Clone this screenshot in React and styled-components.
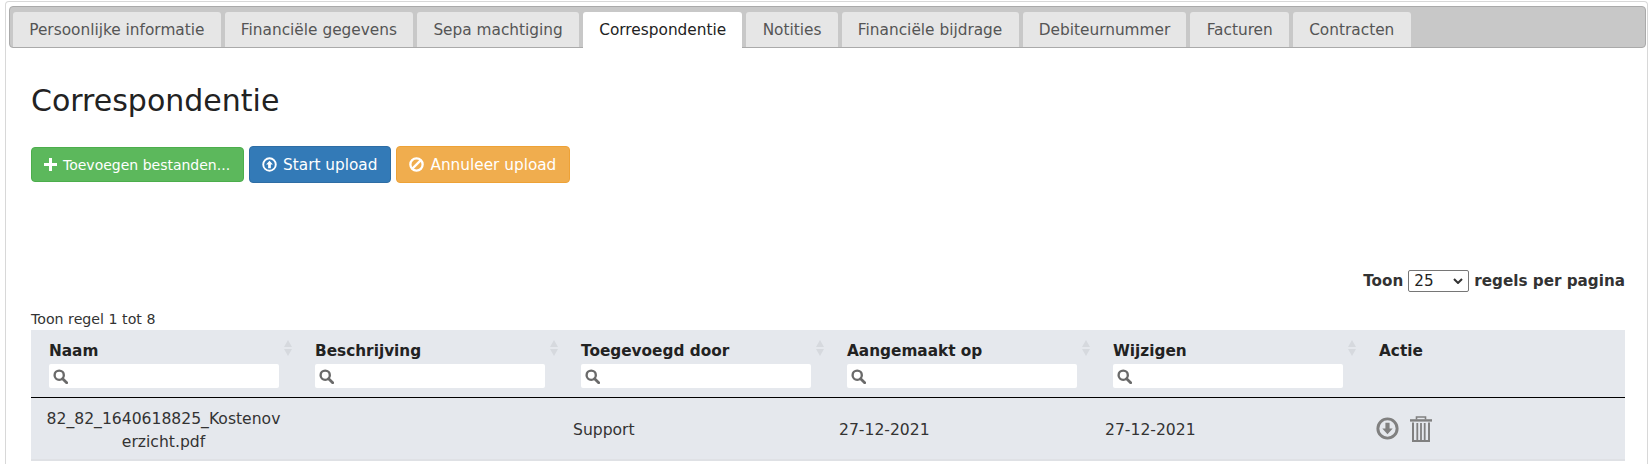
import React from 'react'
import styled, { createGlobalStyle } from 'styled-components'

const GlobalStyle = createGlobalStyle`
  html, body {
    margin: 0;
    padding: 0;
    background: #fff;
    font-family: 'DejaVu Sans', Verdana, sans-serif;
    color: #222;
  }
  * { box-sizing: border-box; }
`

const Panel = styled.div`
  margin: 1px 1px 0 5px;
  height: 463px;
  padding: 4px 1px 0 3px;
  border: 1px solid #d8d8d8;
  border-bottom: 0;
  border-radius: 4px 4px 0 0;
  overflow: hidden;
`

const TabBar = styled.ul`
  display: flex;
  gap: 4px;
  height: 42px;
  margin: 0;
  padding: 5px 0 0 3px;
  list-style: none;
  background: #c8c8c8;
  border: 1px solid #aaa;
  border-radius: 4px;
`

const Tab = styled.li`
  height: ${({ $active }) => ($active ? '37px' : '35px')};
  padding: 8px 16.2px 0;
  font-size: 15.35px;
  line-height: 20px;
  color: ${({ $active }) => ($active ? '#222' : '#555')};
  background: ${({ $active }) => ($active ? '#fff' : '#e6e6e6')};
  border-radius: 3px 3px 0 0;
  white-space: nowrap;
`

const Content = styled.div`
  padding: 0 21px 0 22px;
`

const Title = styled.h1`
  margin: 34px 0 0;
  font-size: 30px;
  font-weight: 400;
  line-height: 38px;
  color: #222;
`

const Buttons = styled.div`
  display: flex;
  align-items: center;
  gap: 5px;
  margin-top: 26px;
`

const Button = styled.button`
  display: flex;
  align-items: center;
  gap: 6px;
  height: ${({ $small }) => ($small ? '35px' : '37px')};
  padding: 0 13px 0 12px;
  font-family: inherit;
  font-size: ${({ $small }) => ($small ? '14px' : '15.3px')};
  color: #fff;
  background: ${({ $bg }) => $bg};
  border: 1px solid ${({ $line }) => $line};
  border-radius: 4px;
`

const PageSize = styled.div`
  display: flex;
  justify-content: flex-end;
  align-items: center;
  gap: 5px;
  margin-top: 87px;
  font-size: 15.2px;
  font-weight: 700;
  color: #333;
`

const Select = styled.div`
  display: flex;
  align-items: center;
  justify-content: space-between;
  width: 61px;
  height: 22px;
  padding: 0 5px;
  font-weight: 400;
  color: #222;
  border: 1px solid #767676;
  border-radius: 2px;
`

const Info = styled.div`
  margin-top: 17px;
  font-size: 14.2px;
  line-height: 21px;
  color: #333;
`

const Row = styled.div`
  display: grid;
  grid-template-columns: repeat(5, 266px) 1fr;
  background: #e5e8ed;
`

const HeadRow = styled(Row)`
  height: 68px;
  border-bottom: 1px solid #000;
`

const BodyRow = styled(Row)`
  height: 63px;
  border-bottom: 2px solid #dfe1e5;
  align-items: center;
`

const HeadCell = styled.div`
  position: relative;
  padding: 11px 0 0 18px;
  font-size: 15.3px;
  font-weight: 700;
  line-height: 20px;
  color: #222;
`

const Sort = styled.svg`
  position: absolute;
  top: 10px;
  right: 5px;
`

const Search = styled.div`
  display: flex;
  align-items: center;
  width: 230px;
  height: 24px;
  margin-top: 3px;
  padding-left: 4px;
  background: #fff;
  border-radius: 2px;
`

const Cell = styled.div`
  padding: 4px 14px 0 13px;
  font-size: 15.6px;
  line-height: 23px;
  text-align: ${({ $center }) => ($center ? 'center' : 'left')};
  overflow-wrap: anywhere;
  color: #333;
`

const PlainCell = styled(Cell)`
  padding-left: 10px;
`

const Actions = styled.div`
  display: flex;
  align-items: center;
  gap: 11px;
  padding-left: 15px;
`

const SearchIcon = () => (
  <svg width="15" height="15" viewBox="0 0 14 14" fill="none" stroke="#6a6a6a">
    <circle cx="5.8" cy="5.8" r="4.3" strokeWidth="2.2" />
    <path d="M9 9l3.8 3.8" strokeWidth="2.6" strokeLinecap="round" />
  </svg>
)

const SortIcon = () => (
  <Sort width="8" height="16" viewBox="0 0 8 16" fill="#d6d9de">
    <path d="M4 0l4 7H0zM4 16l4-7H0z" />
  </Sort>
)

const CircleArrow = ({ up, size = 15, color = '#fff' }) => (
  <svg width={size} height={size} viewBox="0 0 22 22">
    <circle cx="11" cy="11" r="9.2" fill="none" stroke={color} strokeWidth="2.8" />
    <path
      d={up ? 'M11 5.5l5 5.5h-3v5.5H9V11H6z' : 'M11 16.5l5-5.5h-3V5.5H9V11H6z'}
      fill={color}
    />
  </svg>
)

const tabs = [
  'Persoonlijke informatie',
  'Financiële gegevens',
  'Sepa machtiging',
  'Correspondentie',
  'Notities',
  'Financiële bijdrage',
  'Debiteurnummer',
  'Facturen',
  'Contracten',
]

const columns = ['Naam', 'Beschrijving', 'Toegevoegd door', 'Aangemaakt op', 'Wijzigen']

export default function App() {
  return (
    <>
      <GlobalStyle />
      <Panel>
        <TabBar>
          {tabs.map((t) => (
            <Tab key={t} $active={t === 'Correspondentie'}>{t}</Tab>
          ))}
        </TabBar>
        <Content>
          <Title>Correspondentie</Title>
          <Buttons>
            <Button $small $bg="#5cb85c" $line="#4cae4c">
              <svg width="13" height="13" viewBox="0 0 13 13" fill="#fff">
                <path d="M5 0h3v5h5v3H8v5H5V8H0V5h5z" />
              </svg>
              Toevoegen bestanden...
            </Button>
            <Button $bg="#337ab7" $line="#2e6da4">
              <CircleArrow up />
              Start upload
            </Button>
            <Button $bg="#f0ad4e" $line="#eea236">
              <svg width="15" height="15" viewBox="0 0 22 22" fill="none" stroke="#fff" strokeWidth="3.4">
                <circle cx="11" cy="11" r="9" />
                <path d="M4.6 17.4L17.4 4.6" />
              </svg>
              Annuleer upload
            </Button>
          </Buttons>
          <PageSize>
            Toon
            <Select>
              25
              <svg width="10" height="6" viewBox="0 0 10 6" fill="none" stroke="#333" strokeWidth="2">
                <path d="M1 1l4 4 4-4" />
              </svg>
            </Select>
            regels per pagina
          </PageSize>
          <Info>Toon regel 1 tot 8</Info>
          <HeadRow>
            {columns.map((c) => (
              <HeadCell key={c}>
                {c}
                <SortIcon />
                <Search><SearchIcon /></Search>
              </HeadCell>
            ))}
            <HeadCell>Actie</HeadCell>
          </HeadRow>
          <BodyRow>
            <Cell $center>82_82_1640618825_Kostenoverzicht.pdf</Cell>
            <PlainCell />
            <PlainCell>Support</PlainCell>
            <PlainCell>27-12-2021</PlainCell>
            <PlainCell>27-12-2021</PlainCell>
            <Actions>
              <CircleArrow size={23} color="#808080" />
              <svg width="22" height="26" viewBox="0 0 22 26" fill="none" stroke="#808080">
                <path d="M6.5 3.5V1h9v2.5" strokeWidth="1.6" />
                <path d="M0 4.4h22" strokeWidth="2.4" />
                <path d="M3 6.5V25h16V6.5" strokeWidth="2" />
                <path d="M7.3 7v17M11 7v17M14.7 7v17" strokeWidth="1.8" />
              </svg>
            </Actions>
          </BodyRow>
        </Content>
      </Panel>
    </>
  )
}
